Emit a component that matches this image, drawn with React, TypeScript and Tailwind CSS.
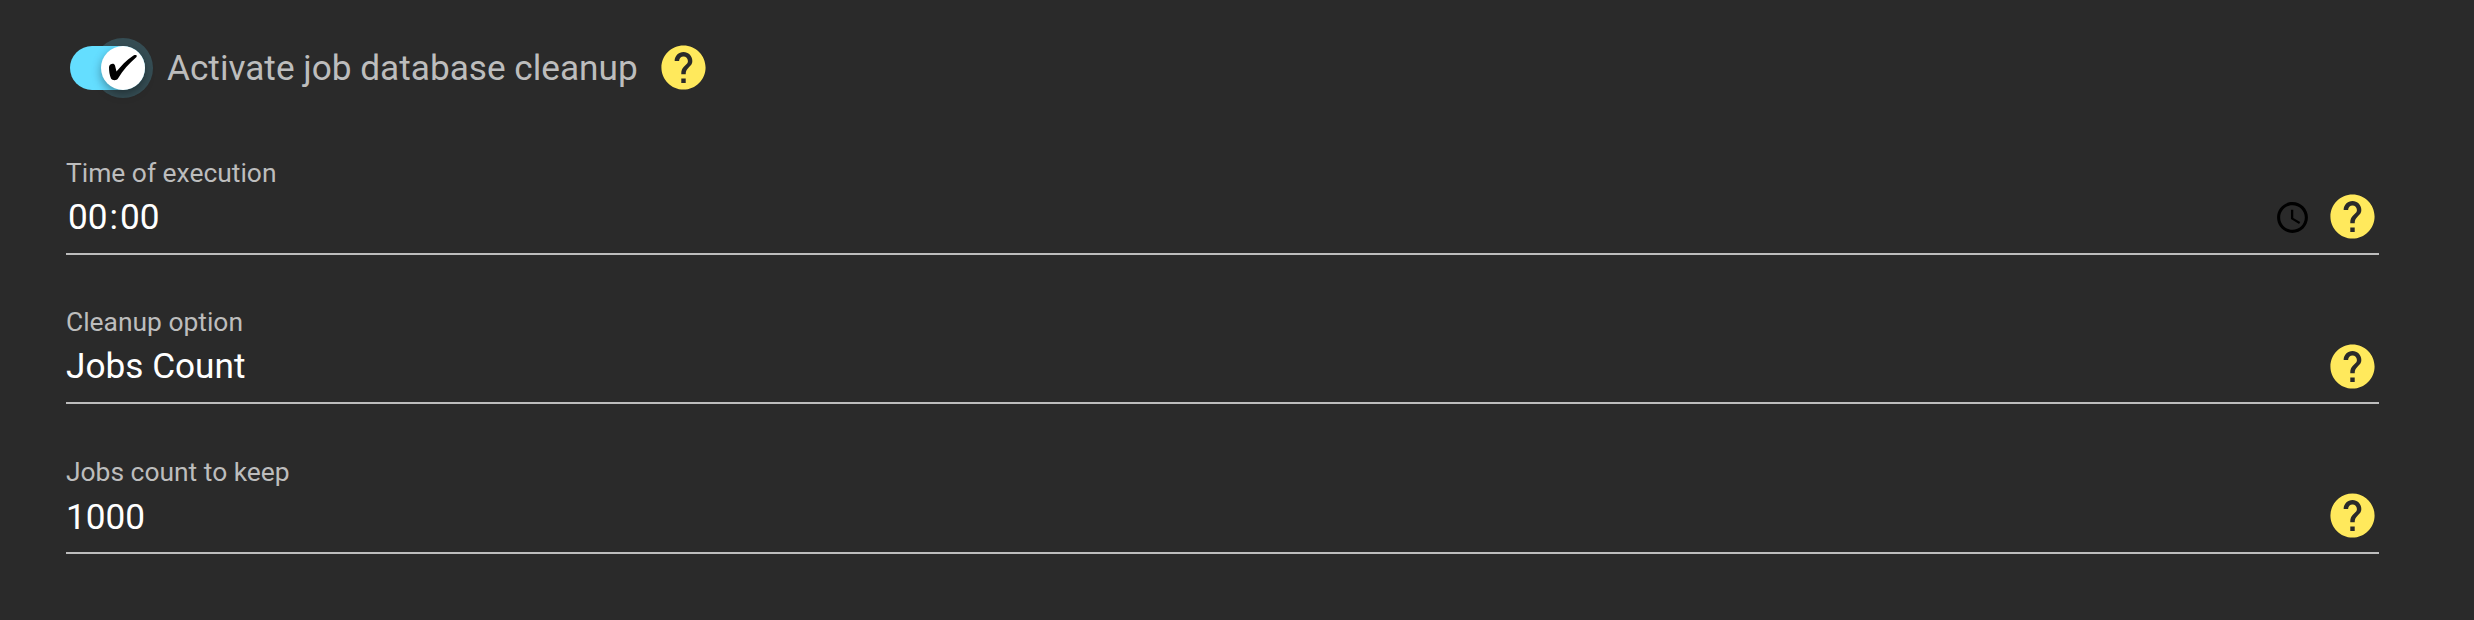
import { useState, type ReactNode } from "react";

function HelpIcon() {
  return (
    <svg viewBox="0 0 24 24" className="size-[53px] shrink-0 fill-[#ffe95c]">
      <path d="M12 2C6.48 2 2 6.48 2 12s4.48 10 10 10 10-4.48 10-10S17.52 2 12 2zm1 17h-2v-2h2v2zm2.07-7.75l-.9.92C13.45 12.9 13 13.5 13 15h-2v-.5c0-1.1.45-2.1 1.17-2.83l1.24-1.26c.37-.36.59-.86.59-1.41 0-1.1-.9-2-2-2s-2 .9-2 2H8c0-2.21 1.79-4 4-4s4 1.79 4 4c0 .88-.36 1.68-.93 2.25z" />
    </svg>
  );
}

function ClockIcon() {
  return (
    <svg viewBox="0 0 24 24" className="mt-0.5 mr-[15px] size-[37px] shrink-0 fill-black">
      <path d="M11.99 2C6.47 2 2 6.48 2 12s4.47 10 9.99 10C17.52 22 22 17.52 22 12S17.52 2 11.99 2zM12 20c-4.42 0-8-3.58-8-8s3.58-8 8-8 8 3.58 8 8-3.58 8-8 8zm.5-13H11v6l5.25 3.15.75-1.23-4.5-2.67z" />
    </svg>
  );
}

function Toggle({ checked, onChange }: { checked: boolean; onChange: () => void }) {
  return (
    <button
      type="button"
      role="switch"
      aria-checked={checked}
      aria-label="Activate job database cleanup"
      onClick={onChange}
      className={`relative h-11 w-[75px] shrink-0 rounded-full ${checked ? "bg-[#64deff]" : "bg-[#777777]"}`}
    >
      <span className={`absolute -top-2 size-[60px] rounded-full bg-[#64deff]/20 ${checked ? "-right-2" : "-left-2"}`} />
      <span
        className={`absolute top-0 flex size-11 items-center justify-center rounded-full bg-white shadow-[0_4px_10px_rgba(0,0,0,0.35)] ${checked ? "right-0" : "left-0"}`}
      >
        {checked && (
          <svg viewBox="0 0 44 44" className="size-11">
            <path d="M8 21c.5-3 5-4.500 6-1.500l1.500 6C20 20 25 14.500 32.500 9.500c2-1 4-.5 3 1.500C28 17.500 22 24 17 32.500c-1 2-5.500 2.500-7 0C8.500 29 8 25 8 21z" />
          </svg>
        )}
      </span>
    </button>
  );
}

interface FieldProps {
  label: string;
  icon?: ReactNode;
  children: ReactNode;
}

function Field({ label, icon, children }: FieldProps) {
  return (
    <div className="flex h-[100px] items-end border-b-2 border-[#bdbdbd]">
      <div className="flex h-full flex-1 flex-col">
        <span className="text-[26.4px] leading-[37px] text-[#bdbdbd]">{label}</span>
        <span className="text-[35.2px] leading-[50px] text-white">{children}</span>
      </div>
      <div className="-mr-[0.4px] mb-[9.6px] flex items-center">
        {icon}
        <HelpIcon />
      </div>
    </div>
  );
}

export default function App() {
  const [active, setActive] = useState(true);

  return (
    <div className="h-[620px] w-full bg-[#2a2a2a] pt-[41px] pr-[95px] pl-[66px] font-['Roboto',sans-serif]">
      <div className="flex h-[53px] items-center pl-1">
        <Toggle checked={active} onChange={() => setActive(!active)} />
        <span className="mr-[19.2px] ml-[22px] pt-px text-[35.2px] leading-[48px] text-[#bdbdbd]">
          Activate job database cleanup
        </span>
        <HelpIcon />
      </div>

      <div className="mt-[61px] flex flex-col gap-[49.4px]">
        <Field label="Time of execution" icon={<ClockIcon />}>
          <span className="pl-[2px]">
            00<span className="px-[2px]">:</span>00
          </span>
        </Field>
        <Field label="Cleanup option">Jobs Count</Field>
        <Field label="Jobs count to keep">
          <span className="inline-block pt-px">1000</span>
        </Field>
      </div>
    </div>
  );
}
